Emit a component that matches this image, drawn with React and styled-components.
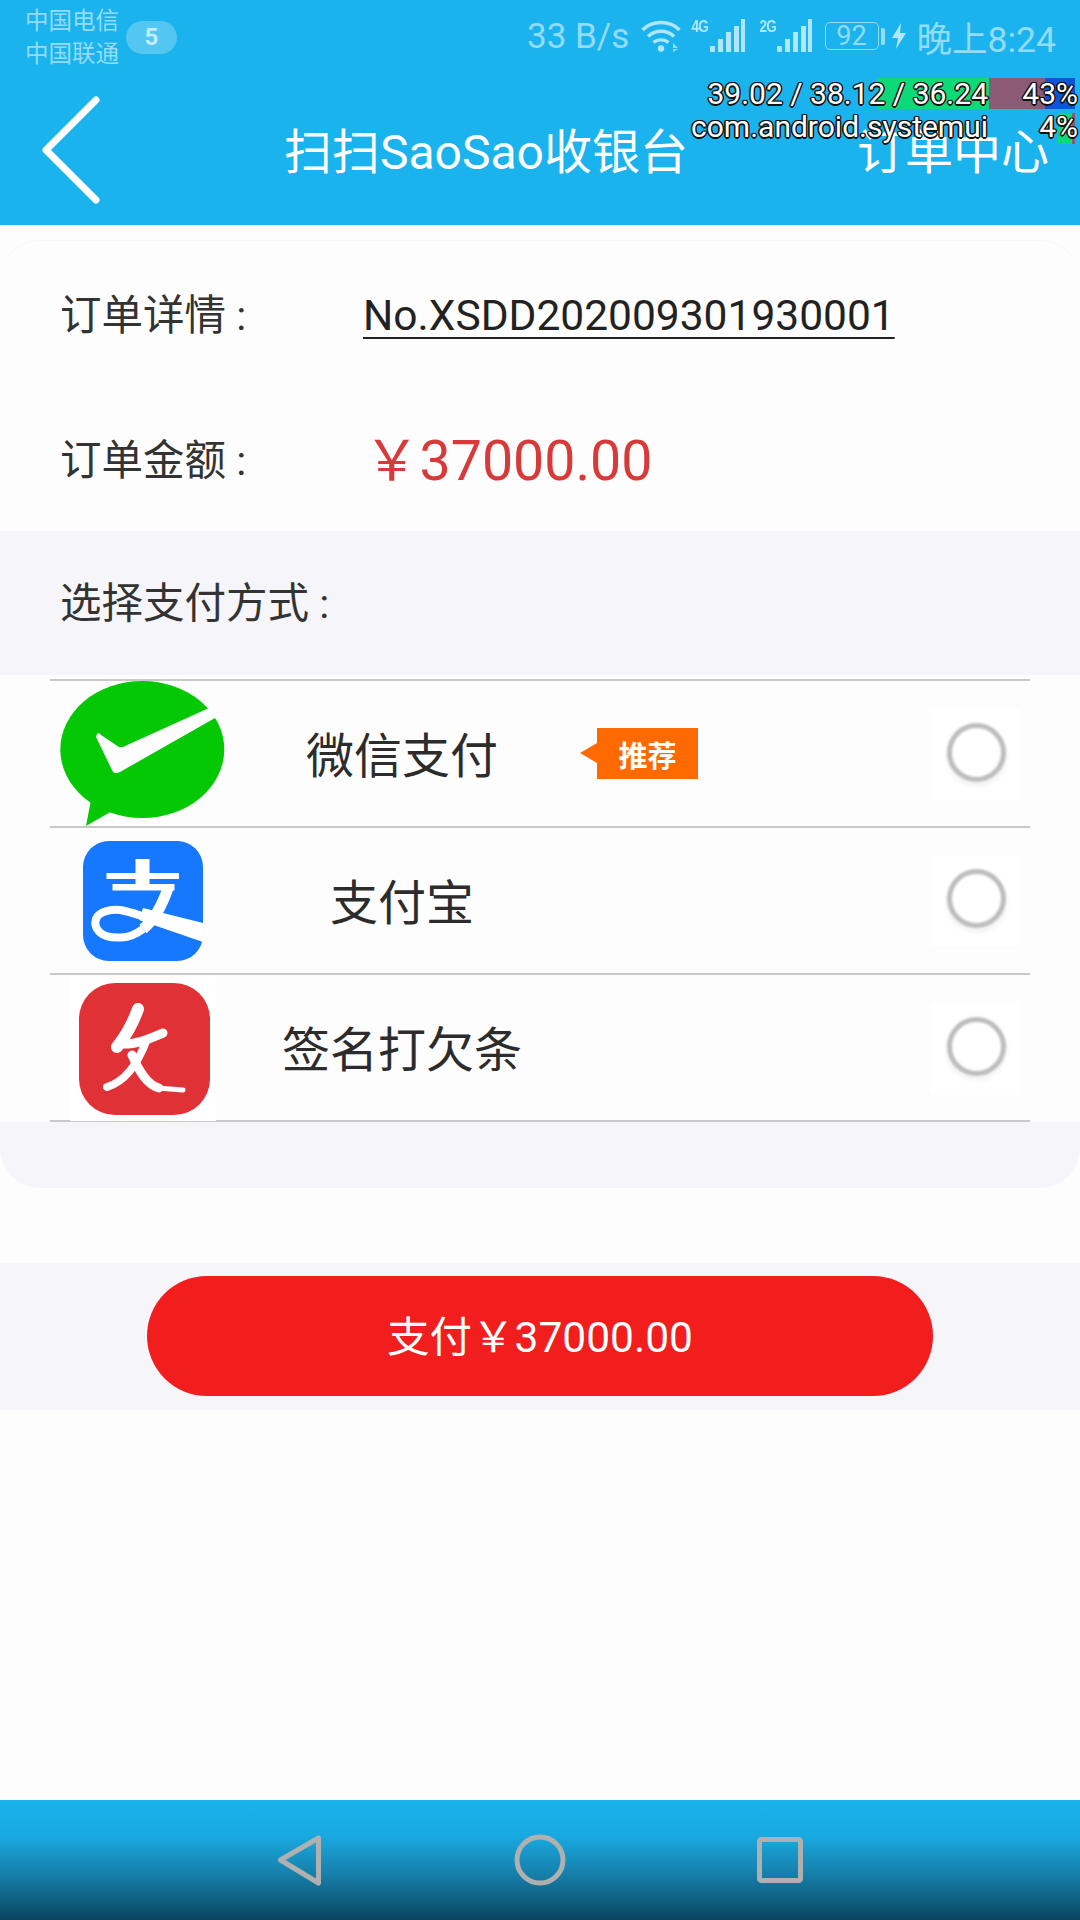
import React from "react";
import styled, { createGlobalStyle } from "styled-components";

const FONT = `Roboto, "Noto Sans CJK SC", sans-serif`;
const MUTED = "#93dcf8";
const PALE = "#aee6fb";

const Global = createGlobalStyle`
  html, body { margin: 0; padding: 0; background: #fdfdfd; }
  body { font-family: ${FONT}; }
  * { box-sizing: border-box; }
`;

const Page = styled.div`
  position: relative;
  width: 1080px;
  height: 1920px;
  display: flex;
  flex-direction: column;
  background: #fdfdfd;
  overflow: hidden;
`;

const Header = styled.header`
  position: relative;
  flex: 0 0 225px;
  display: flex;
  flex-direction: column;
  background: #1ab3ed;
  color: #fff;
`;

const StatusBar = styled.div`
  flex: 0 0 72px;
  display: flex;
  align-items: flex-start;
  justify-content: space-between;
  padding: 5px 24px 0 25px;
  color: ${MUTED};
`;

const StatusLeft = styled.div`
  display: flex;
  align-items: center;
  gap: 7px;
`;

const Carriers = styled.div`
  display: flex;
  flex-direction: column;
  font-size: 23.5px;
  line-height: 33px;
  white-space: nowrap;
`;

const CountBadge = styled.span`
  width: 51px;
  height: 33px;
  border-radius: 17px;
  margin-top: -2px;
  display: flex;
  align-items: center;
  justify-content: center;
  background: rgba(255, 255, 255, 0.25);
  color: #c4edfc;
  font-size: 24px;
  font-weight: 700;
`;

const StatusRight = styled.div`
  display: flex;
  align-items: center;
  height: 56px;
  margin-top: 3px;
`;

const StatusText = styled.span`
  font-size: ${(p) => p.$size}px;
  white-space: nowrap;
  margin-left: ${(p) => p.$ml || 0}px;
`;

const NetType = styled.span`
  font-size: 16px;
  font-weight: 700;
  letter-spacing: -1px;
  align-self: flex-start;
  margin: 10px 0 0 ${(p) => p.$ml || 0}px;
  color: ${PALE};
  font-family: "Liberation Sans", sans-serif;
  transform: scaleX(0.85);
`;

const Battery = styled.span`
  width: 54px;
  height: 28px;
  margin-left: 12.5px;
  border: 1.5px solid ${MUTED};
  border-radius: 5px;
  display: flex;
  align-items: center;
  justify-content: center;
  font-size: 27px;
  color: ${MUTED};
`;

const BatteryNub = styled.span`
  width: 4px;
  height: 17px;
  margin: 0 7px 0 2px;
  background: ${MUTED};
  border-radius: 0 2px 2px 0;
`;

const Toolbar = styled.div`
  flex: 1;
  display: grid;
  grid-template-columns: 284px auto 1fr;
  align-items: center;
  padding: 0 31px 2px 0;
`;

const BackIcon = styled.svg`
  width: 70px;
  height: 120px;
  margin: 5px 0 0 37px;
  display: block;
  filter: blur(0.5px);
`;

const Title = styled.h1`
  margin: 0;
  font-size: 48px;
  font-weight: 400;
  white-space: nowrap;
`;

const ToolbarLink = styled.span`
  justify-self: end;
  font-size: 48px;
  white-space: nowrap;
`;

const StatsOverlay = styled.div`
  position: absolute;
  top: 78px;
  right: 0;
  width: 400px;
  font-size: 30px;
  color: #fff;
`;

const StatLine = styled.div`
  position: relative;
  height: ${(p) => p.$h}px;
  line-height: ${(p) => p.$lh}px;
`;

const StatSegment = styled.span`
  position: absolute;
  top: ${(p) => p.$top || 0}px;
  bottom: 0;
  left: ${(p) => p.$left}px;
  width: ${(p) => p.$w}px;
  background: ${(p) => p.$color};
`;

const StatLabel = styled.span`
  position: absolute;
  top: 0;
  right: ${(p) => p.$right}px;
  white-space: nowrap;
  text-shadow: 1.5px 0 0 #111, -1.5px 0 0 #111, 0 1.5px 0 #111, 0 -1.5px 0 #111,
    1px 1px 0 #111, -1px 1px 0 #111, 1px -1px 0 #111, -1px -1px 0 #111;
`;

const Main = styled.main`
  flex: 1;
  display: flex;
  flex-direction: column;
  padding-top: 15px;
`;

const Card = styled.section`
  border-top: 1px solid #f6f6f6;
  border-radius: 40px;
  overflow: hidden;
  background: #fdfdfd;
`;

const InfoRow = styled.div`
  height: ${(p) => p.$h}px;
  padding-left: 60px;
  display: flex;
  align-items: center;
`;

const Label = styled.span`
  flex: 0 0 ${(p) => p.$w}px;
  margin-bottom: ${(p) => p.$lift || 0}px;
  font-size: 41.5px;
  color: #333;
  white-space: nowrap;
`;

const OrderNumber = styled.span`
  font-size: 42.5px;
  color: #222;
  text-decoration: underline;
  text-decoration-thickness: 2px;
  text-underline-offset: 7px;
  white-space: nowrap;
`;

const Amount = styled.span`
  margin-bottom: 9px;
  font-size: 55.5px;
  color: #d83a3a;
  white-space: nowrap;
`;

const MethodHeading = styled.div`
  height: 144px;
  padding: 0 0 4px 60px;
  display: flex;
  align-items: center;
  background: #f5f5fa;
`;

const MethodList = styled.div`
  margin: 4px 50px 0;
  border-top: 2px solid #c8c8c8;
`;

const MethodRow = styled.div`
  height: 147px;
  display: grid;
  grid-template-columns: 186px 332px 1fr 90px;
  align-items: center;
  padding-right: 10px;
  border-bottom: 2px solid #c8c8c8;
`;

const MethodIcon = styled.svg`
  display: block;
  justify-self: center;
`;

const MethodName = styled.span`
  justify-self: center;
  margin-bottom: 4px;
  font-size: 48px;
  color: #2c2c2c;
  white-space: nowrap;
`;

const Recommend = styled.span`
  position: relative;
  width: 101px;
  height: 51px;
  margin: 0 0 1px 29px;
  display: flex;
  align-items: center;
  justify-content: center;
  background: #ff6a00;
  color: #fff;
  font-size: 29px;
  font-weight: 700;
  &::before {
    content: "";
    position: absolute;
    left: -17px;
    top: 15px;
    border-style: solid;
    border-width: 10px 17px 10px 0;
    border-color: transparent #ff6a00 transparent transparent;
  }
`;

const RadioBox = styled.span`
  width: 90px;
  height: 91px;
  display: flex;
  align-items: center;
  justify-content: center;
  background: #fff;
`;

const RadioCircle = styled.span`
  width: 59px;
  height: 59px;
  margin: 0 0 4px 3px;
  border-radius: 50%;
  border: 5px solid #bdbdbd;
  box-shadow: 0 4px 6px rgba(0, 0, 0, 0.06);
  filter: blur(0.8px);
`;

const CardFoot = styled.div`
  height: 66px;
  background: #f5f5fa;
`;

const PayBand = styled.div`
  height: 147px;
  margin-top: 75px;
  display: flex;
  align-items: center;
  justify-content: center;
  background: #f5f5fa;
`;

const PayButton = styled.button`
  width: 786px;
  height: 120px;
  margin-bottom: 2px;
  padding: 0 0 5px;
  border: 0;
  border-radius: 60px;
  background: #f21d1d;
  color: #fff;
  font-family: ${FONT};
  font-size: 42.5px;
`;

const NavBar = styled.nav`
  flex: 0 0 120px;
  background: linear-gradient(#1ab3ed 0%, #19a9e1 30%, #167fa9 62%, #0a4560 100%);
`;

const NavArt = styled.svg`
  display: block;
  width: 1080px;
  height: 120px;
`;

const Wifi = () => (
  <svg width="40" height="34" viewBox="0 0 40 34" style={{ marginLeft: 12 }} fill="none" stroke={PALE} strokeWidth="3.4">
    <path d="M1.5 11 C11 1 29 1 38.5 11" />
    <path d="M7 17.5 C14 10.5 26 10.5 33 17.5" />
    <path d="M12.5 23.5 C16.5 20 23.5 20 27.5 23.5" />
    <circle cx="20" cy="29.5" r="3.2" fill={PALE} stroke="none" />
    <path d="M32 24 l5 5 h-5z M32 33 l5-3 h-5z" fill={MUTED} stroke="none" />
  </svg>
);

const Signal = () => (
  <svg width="35" height="34" viewBox="0 0 35 34" fill={PALE}>
    <rect x="0" y="27" width="5" height="6" rx="1" />
    <rect x="8" y="20" width="5" height="13" />
    <rect x="16" y="13" width="5" height="20" />
    <rect x="24" y="7" width="5" height="26" />
    <rect x="31" y="0" width="4" height="33" />
  </svg>
);

const Bolt = () => (
  <svg width="14" height="26" viewBox="0 0 14 26" fill={PALE}>
    <path d="M9 0 L0 15 H6 L4 26 L14 10 H8 Z" />
  </svg>
);

const WeChatLogo = () => (
  <MethodIcon width="166" height="146" viewBox="60 681 166 146">
    <ellipse cx="142.3" cy="749.5" rx="82" ry="68.5" fill="#04c804" />
    <path d="M91 800 L86 826 L112 811 Z" fill="#04c804" />
    <path d="M97 734 Q99 732 101 735 L119 747 Q122 748 125 746 L209 708 L228 708 L228 716 L215 718 L120 772 Q114 775 112 770 L96 737 Z" fill="#fdfdfd" />
  </MethodIcon>
);

const AlipayLogo = () => (
  <MethodIcon width="120" height="120" viewBox="0 0 120 120">
    <rect width="120" height="120" rx="26" fill="#1677ff" />
    <rect x="52.5" y="18" width="14" height="31" fill="#fff" />
    <rect x="23.5" y="32" width="72.5" height="6" fill="#fff" />
    <rect x="29.5" y="43" width="62" height="6.5" fill="#fff" />
    <g fill="none" stroke="#fff">
      <path d="M85 47 C80 62 72 78 60 88" strokeWidth="11" />
      <path d="M60 88 C52 94 44 97 36 96.5 C18 97 10 88 13 78 C16 70 30 67 42 70 C50 72 56 74 62 76" strokeWidth="8" />
    </g>
    <path d="M60 67 L120 82 V101 L56 79 Z" fill="#fff" />
  </MethodIcon>
);

const IouLogo = () => (
  <MethodIcon width="146" height="146" viewBox="-9 -8 146 146">
    <rect x="-9" y="-8" width="146" height="146" fill="#fff" />
    <rect width="131" height="132" rx="36" fill="#e03236" />
    <g fill="none" stroke="#fff" strokeLinecap="round" strokeLinejoin="round" style={{ filter: "blur(0.5px)" }}>
      <path d="M59 26 C54 40 46 54 38 64" strokeWidth="12" />
      <path d="M42 61 C56 62 70 56 84 50" strokeWidth="9" />
      <path d="M68 56 C60 78 48 98 28 104" strokeWidth="8" />
      <path d="M53 72 C60 88 68 102 80 105" strokeWidth="9" />
      <path d="M78 105 L104 107" strokeWidth="5" />
    </g>
  </MethodIcon>
);

const methods = [
  { id: "wechat", name: "微信支付", Logo: WeChatLogo, tag: "推荐" },
  { id: "alipay", name: "支付宝", Logo: AlipayLogo },
  { id: "iou", name: "签名打欠条", Logo: IouLogo },
];

export default function App() {
  return (
    <Page>
      <Global />
      <Header>
        <StatusBar>
          <StatusLeft>
            <Carriers>
              <span>中国电信</span>
              <span>中国联通</span>
            </Carriers>
            <CountBadge>5</CountBadge>
          </StatusLeft>
          <StatusRight>
            <StatusText $size={35}>33 B/s</StatusText>
            <Wifi />
            <NetType $ml={9}>4G</NetType>
            <Signal />
            <NetType $ml={13}>2G</NetType>
            <Signal />
            <Battery>92</Battery>
            <BatteryNub />
            <Bolt />
            <StatusText $size={35.5} $ml={11}>晚上8:24</StatusText>
          </StatusRight>
        </StatusBar>
        <Toolbar>
          <BackIcon viewBox="0 0 70 120" fill="none" stroke="#fff" strokeWidth="7" strokeLinecap="round" strokeLinejoin="round">
            <path d="M59 10 L9 60 L59 110" />
          </BackIcon>
          <Title>扫扫SaoSao收银台</Title>
          <ToolbarLink>订单中心</ToolbarLink>
        </Toolbar>
        <StatsOverlay>
          <StatLine $h={31} $lh={31}>
            <StatSegment $left={197} $w={112} $color="#0cd977" />
            <StatSegment $left={309} $w={56} $color="#8b5a75" />
            <StatSegment $left={365} $w={30} $color="#0b55dc" />
            <StatLabel $right={92}>39.02 / 38.12 / 36.24</StatLabel>
            <StatLabel $right={2}>43%</StatLabel>
          </StatLine>
          <StatLine $h={35} $lh={35}>
            <StatSegment $top={4} $left={378} $w={14} $color="#0cd977" />
            <StatSegment $top={4} $left={392} $w={3} $color="#8b5a75" />
            <StatLabel $right={92}>com.android.systemui</StatLabel>
            <StatLabel $right={2}>4%</StatLabel>
          </StatLine>
        </StatsOverlay>
      </Header>

      <Main>
        <Card>
          <InfoRow $h={148}>
            <Label $w={303} $lift={6}>订单详情 :</Label>
            <OrderNumber>No.XSDD202009301930001</OrderNumber>
          </InfoRow>
          <InfoRow $h={142}>
            <Label $w={304} $lift={7}>订单金额 :</Label>
            <Amount>￥37000.00</Amount>
          </InfoRow>
          <MethodHeading>
            <Label $w={400} $lift={2}>选择支付方式 :</Label>
          </MethodHeading>
          <MethodList>
            {methods.map(({ id, name, Logo, tag }) => (
              <MethodRow key={id}>
                <Logo />
                <MethodName>{name}</MethodName>
                <div>{tag && <Recommend>{tag}</Recommend>}</div>
                <RadioBox>
                  <RadioCircle />
                </RadioBox>
              </MethodRow>
            ))}
          </MethodList>
          <CardFoot />
        </Card>
        <PayBand>
          <PayButton>支付￥37000.00</PayButton>
        </PayBand>
      </Main>

      <NavBar>
        <NavArt viewBox="0 0 1080 120" fill="none" stroke="#b0b0b0" strokeWidth="5" strokeLinejoin="round">
          <path d="M318.5 38 L280.5 60 L318.5 83 Z" />
          <ellipse cx="540" cy="60" rx="23" ry="23" />
          <rect x="759.5" y="39.5" width="41" height="41" rx="2" />
        </NavArt>
      </NavBar>
    </Page>
  );
}
